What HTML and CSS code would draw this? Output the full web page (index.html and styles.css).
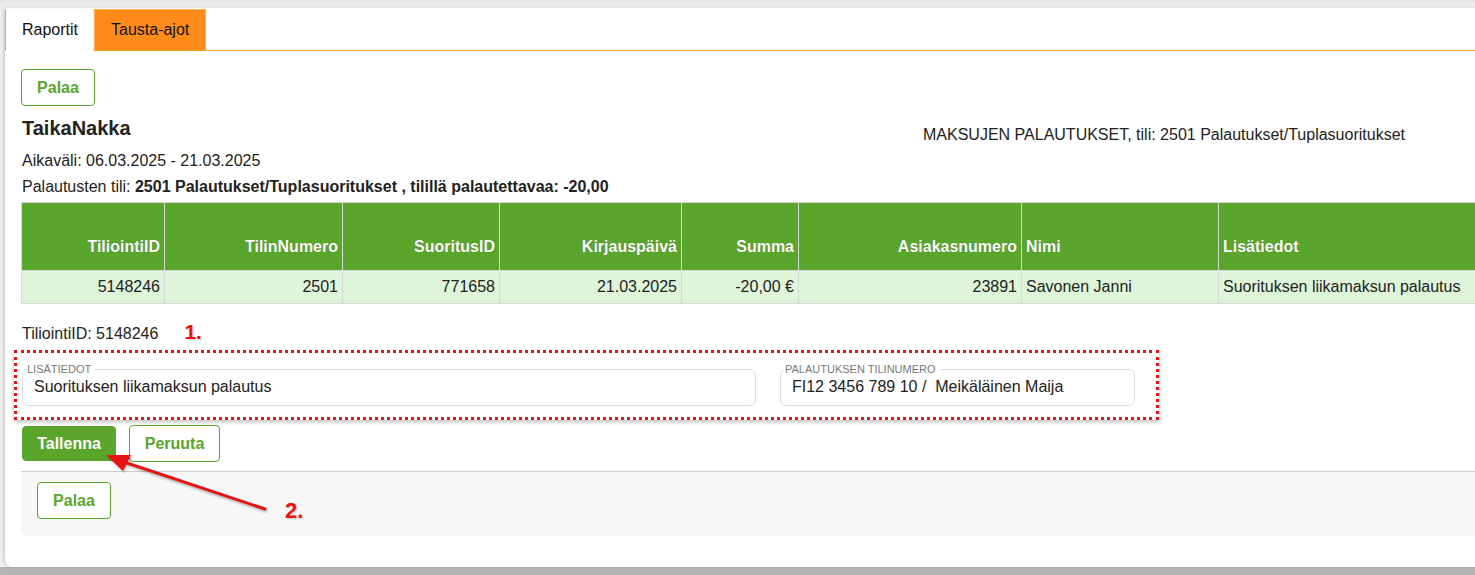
FILE: index.html
```html
<!DOCTYPE html>
<html lang="fi">
<head>
<meta charset="utf-8">
<title>Raportit</title>
<link rel="stylesheet" href="styles.css">
</head>
<body>
<div class="card">
  <div class="tabs">
    <div class="tab active">Raportit</div>
    <div class="tab orange">Tausta-ajot</div>
    <div class="tab-fill"></div>
  </div>
  <div class="content">
    <button class="btn outline top-back">Palaa</button>
    <div class="head-row">
      <h1 class="title">TaikaNakka</h1>
      <div class="report-name">MAKSUJEN PALAUTUKSET, tili: 2501 Palautukset/Tuplasuoritukset</div>
    </div>
    <p class="line">Aikaväli: 06.03.2025 - 21.03.2025</p>
    <p class="line">Palautusten tili: <b>2501 Palautukset/Tuplasuoritukset , tilillä palautettavaa: -20,00</b></p>
    <table class="grid">
      <colgroup>
        <col style="width:143px"><col style="width:178px"><col style="width:157px"><col style="width:182px"><col style="width:117px"><col style="width:223px"><col style="width:197px"><col>
      </colgroup>
      <thead>
        <tr>
          <th class="r">TiliointiID</th>
          <th class="r">TilinNumero</th>
          <th class="r">SuoritusID</th>
          <th class="r">Kirjauspäivä</th>
          <th class="r">Summa</th>
          <th class="r">Asiakasnumero</th>
          <th>Nimi</th>
          <th>Lisätiedot</th>
        </tr>
      </thead>
      <tbody>
        <tr>
          <td class="r">5148246</td>
          <td class="r">2501</td>
          <td class="r">771658</td>
          <td class="r">21.03.2025</td>
          <td class="r">-20,00 €</td>
          <td class="r">23891</td>
          <td>Savonen Janni</td>
          <td>Suorituksen liikamaksun palautus</td>
        </tr>
      </tbody>
    </table>
    <div class="id-row">
      <span>TiliointiID: 5148246</span>
      <span class="mark mark1">1.</span>
    </div>
    <div class="highlight">
      <fieldset class="field wide">
        <legend>LISÄTIEDOT</legend>
        <div class="value">Suorituksen liikamaksun palautus</div>
      </fieldset>
      <fieldset class="field narrow">
        <legend>PALAUTUKSEN TILINUMERO</legend>
        <div class="value">FI12 3456 789 10 /&nbsp; Meikäläinen Maija</div>
      </fieldset>
    </div>
    <div class="actions">
      <button class="btn solid">Tallenna</button>
      <button class="btn outline">Peruuta</button>
    </div>
    <div class="footer">
      <button class="btn outline">Palaa</button>
    </div>
  </div>
  <svg class="arrow" width="200" height="80" viewBox="0 0 200 80">
    <g transform="translate(-100,-445)">
      <line x1="265" y1="509" x2="118" y2="460" stroke="#e81414" stroke-width="3" stroke-linecap="round"/>
      <polygon points="106,455 131,455 123,471" fill="#e81414"/>
    </g>
  </svg>
  <span class="mark mark2">2.</span>
</div>
</body>
</html>
```
FILE: styles.css
```css
html, body {
  margin: 0;
  padding: 0;
  overflow: hidden;
  height: 575px;
}
body {
  background: #b3b3b3;
  font-family: "Liberation Sans", Arial, sans-serif;
  color: #222;
  font-size: 16px;
}
body::before {
  content: "";
  position: absolute;
  left: 0;
  top: 0;
  width: 100%;
  height: 567px;
  background: linear-gradient(#e4e4e4, #f0f0f0 8px);
}
.card {
  position: relative;
  background: #fff;
  width: 1520px;
  height: 559px;
  margin-left: 5px;
  margin-top: 8px;
  border-radius: 0 0 0 8px;
  box-shadow: -2px 0 3px rgba(0,0,0,0.12);
}
.tabs {
  display: flex;
  height: 42px;
  padding-top: 1px;
}
.tab {
  box-sizing: border-box;
  height: 42px;
  line-height: 40px;
  font-size: 16px;
  padding: 0 16px;
  color: #111;
  white-space: nowrap;
}
.tab.active {
  width: 89px;
  background: #fff;
  border-left: 1px solid #f5a623;
  border-top: 1px solid #f5f5f5;
  border-right: 1px solid #eee;
}
.tab.orange {
  width: 112px;
  background: #ff8c1a;
  border: 1px solid #ffb04d;
  border-bottom: 1px solid #f5a623;
  padding: 0 0 0 16px;
}
.tab-fill {
  flex: 1;
  border-bottom: 1px solid #f5a623;
}
.content {
  padding: 0 0 0 16px;
}
.btn {
  font-family: "Liberation Sans", Arial, sans-serif;
  font-weight: bold;
  font-size: 16px;
  border-radius: 4px;
  cursor: pointer;
  box-sizing: border-box;
  padding: 0;
}
.btn.outline {
  background: #fff;
  color: #5aa52b;
  border: 1px solid #5aa52b;
  height: 37px;
}
.btn.solid {
  background: #5aa52b;
  color: #fff;
  border: 1px solid #5aa52b;
  height: 35px;
}
.top-back {
  margin-top: 18px;
  width: 74px;
}
.head-row {
  display: flex;
  align-items: flex-start;
  margin-top: 10px;
  height: 28px;
}
.title {
  margin: 0 0 0 1px;
  font-size: 20px;
  font-weight: bold;
  line-height: 24px;
  width: 901px;
}
.report-name {
  font-size: 16px;
  line-height: 18px;
  margin-top: 10px;
}
.line {
  margin: 8px 0 0 1px;
  font-size: 16px;
  line-height: 18px;
}
.grid {
  margin-top: 6px;
  border-collapse: collapse;
  table-layout: fixed;
  width: 1500px;
  font-size: 16px;
}
.grid th, .grid td {
  border: 1px solid #d8d8d8;
  padding: 0 4px;
  text-align: left;
  white-space: nowrap;
}
.grid th.r, .grid td.r {
  text-align: right;
}
.grid th {
  background: #5aa52b;
  color: #fff;
  font-weight: bold;
  height: 68px;
  line-height: 18px;
  vertical-align: bottom;
  padding-bottom: 14px;
  box-sizing: border-box;
  text-shadow: 0 0 1px rgba(0,0,0,0.3);
}
.grid td {
  background: #dff5da;
  height: 33px;
  box-sizing: border-box;
  color: #222;
}
.id-row {
  margin-top: 19px;
  margin-left: 1px;
  font-size: 16px;
  line-height: 18px;
  height: 18px;
  display: flex;
  align-items: baseline;
}
.mark {
  color: #e81414;
  font-weight: bold;
  font-size: 21px;
  line-height: 18px;
  text-shadow: 1px 1px 2px rgba(0,0,0,0.2);
}
.mark1 {
  margin-left: 26px;
}
.mark2 {
  position: absolute;
  left: 280px;
  top: 492px;
  font-size: 22px;
  line-height: 22px;
}
.arrow {
  position: absolute;
  left: 95px;
  top: 437px;
  filter: drop-shadow(1px 2px 1px rgba(0,0,0,0.25));
}
.highlight {
  margin-top: 9px;
  margin-left: -7px;
  width: 1145px;
  height: 70px;
  box-sizing: border-box;
  border: 3px dotted #e81414;
  box-shadow: 0 2px 4px rgba(0,0,0,0.25);
  display: flex;
  gap: 24px;
  padding: 0 0 0 5px;
}
.field {
  margin: 9px 0 0 0;
  padding: 0 11px;
  border: 1px solid #ddd;
  border-radius: 6px;
  height: 44px;
  box-sizing: border-box;
}
.field legend {
  font-size: 11px;
  color: #777;
  padding: 0 4px 0 0;
  margin-left: -7px;
  line-height: 14px;
}
.field .value {
  font-size: 16px;
  line-height: 20px;
  margin-top: 1px;
}
.wide { width: 734px; }
.narrow { width: 355px; }
.actions {
  display: flex;
  gap: 13px;
  align-items: flex-start;
  margin-top: 5px;
  margin-left: 1px;
}
.actions .btn.solid {
  width: 94px;
  margin-top: 1px;
}
.actions .btn.outline {
  width: 91px;
}
.footer {
  margin-top: 9px;
  background: #f7f7f7;
  border-top: 1px solid #ccc;
  height: 65px;
  padding: 10px 16px;
  box-sizing: border-box;
  border-radius: 0 0 0 6px;
}
.footer .btn {
  width: 74px;
}
```
